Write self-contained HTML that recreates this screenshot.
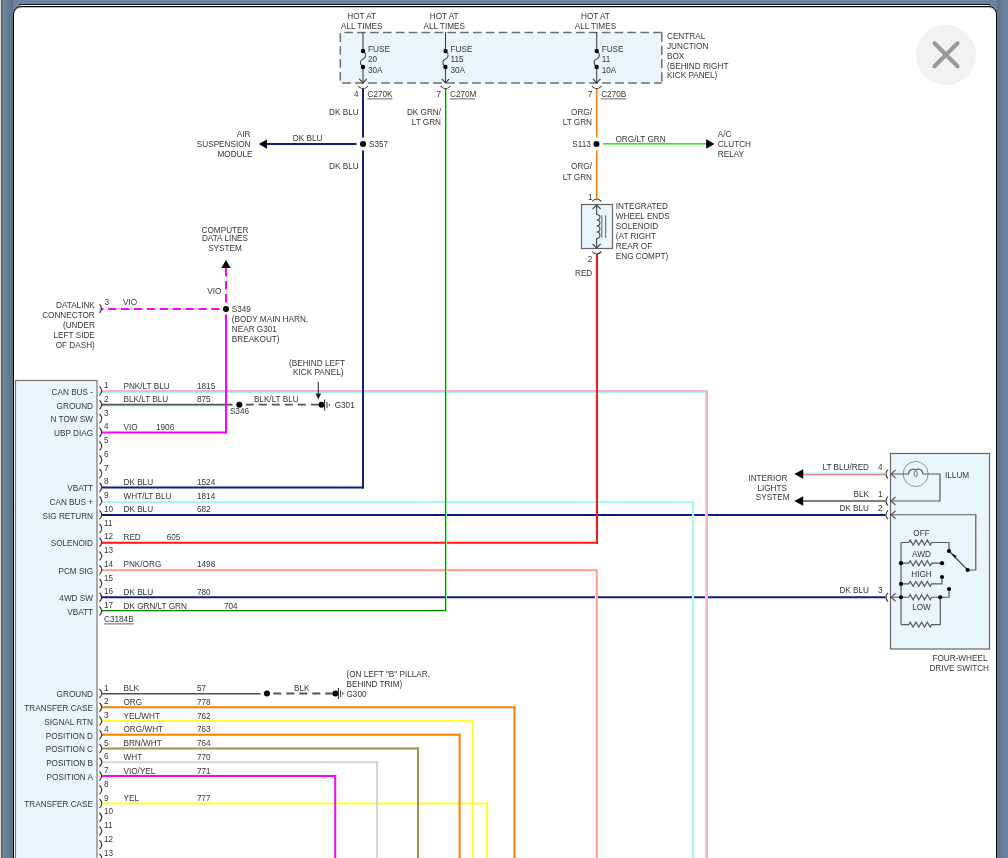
<!DOCTYPE html>
<html><head><meta charset="utf-8"><style>
html,body{margin:0;padding:0;width:1008px;height:858px;overflow:hidden;background:#fff}
#bg{position:absolute;left:0;top:0;width:1008px;height:858px;background:#6a85a2}
#lg{position:absolute;left:3px;top:0;width:10px;height:858px;background:linear-gradient(to right,#6d87a3,#5e7189)}
#rg{position:absolute;left:997px;top:0;width:10px;height:858px;background:linear-gradient(to right,#5e7189,#6d87a3)}
#c0{position:absolute;left:0;top:0;width:1px;height:858px;background:#dedede}
#c1{position:absolute;left:1px;top:0;width:2px;height:858px;background:linear-gradient(to right,#5a5a5a,#767676)}
#c7{position:absolute;left:1007px;top:0;width:1px;height:858px;background:#7a7a7a}
#topl{position:absolute;left:19px;top:4px;width:971px;height:1px;background:#10161c}
#topw{position:absolute;left:20px;top:5px;width:969px;height:1px;background:#fff}
#panel{position:absolute;left:13px;top:6px;width:982px;height:900px;background:#fff;border:1px solid #000;border-radius:8px;box-shadow:inset 0 1px 0 #bbb}
svg{position:absolute;left:0;top:0;-webkit-font-smoothing:antialiased;will-change:transform}
text{font-family:"Liberation Sans",sans-serif;font-size:8.2px}
</style></head><body>
<div id="bg"></div><div id="lg"></div><div id="rg"></div><div id="c0"></div><div id="c1"></div><div id="c7"></div>
<div id="topl"></div><div id="topw"></div>
<div id="panel"></div>
<svg width="1008" height="858" viewBox="0 0 1008 858">
<circle cx="946" cy="55" r="30" fill="#f2f2f2"/>
<path d="M934.5,43.3 L957.5,66.3 M957.5,43.3 L934.5,66.3" stroke="#999" stroke-width="4.2" stroke-linecap="round"/>
<line x1="364.0" y1="487.5" x2="101.5" y2="487.5" stroke="#0d1f80" stroke-width="2"/>
<line x1="356.5" y1="144" x2="266" y2="144" stroke="#0d1f80" stroke-width="2"/>
<line x1="447.0" y1="611.5" x2="101.5" y2="611.5" stroke="#90f890" stroke-width="1"/>
<line x1="446.0" y1="610.5" x2="101.5" y2="610.5" stroke="#008a00" stroke-width="1"/>
<line x1="603" y1="143.5" x2="706.5" y2="143.5" stroke="#ff8000" stroke-width="1.1"/>
<line x1="603" y1="144.5" x2="706.5" y2="144.5" stroke="#80f880" stroke-width="1"/>
<line x1="598.0" y1="542.75" x2="101.5" y2="542.75" stroke="#ff1414" stroke-width="2"/>
<line x1="227.0" y1="432.5" x2="101.5" y2="432.5" stroke="#ff00ff" stroke-width="2"/>
<line x1="101.5" y1="392.5" x2="706.0" y2="392.5" stroke="#a4f4f4" stroke-width="1"/>
<line x1="101.5" y1="391" x2="708.0" y2="391" stroke="#ffb0c8" stroke-width="2"/>
<line x1="101.5" y1="405.9" x2="232.5" y2="405.9" stroke="#a4f4f4" stroke-width="1"/>
<line x1="101.5" y1="404.6" x2="232.5" y2="404.6" stroke="#555" stroke-width="1.6"/>
<line x1="101.5" y1="501.5" x2="694.1" y2="501.5" stroke="#e4dede" stroke-width="1.2"/>
<line x1="101.5" y1="502.5" x2="693.05" y2="502.5" stroke="#a4f4f4" stroke-width="1.1"/>
<line x1="101.5" y1="515" x2="885.5" y2="515" stroke="#0d1f80" stroke-width="2"/>
<line x1="101.5" y1="571.5" x2="596.0" y2="571.5" stroke="#ffeedd" stroke-width="1"/>
<line x1="101.5" y1="569.5" x2="598.05" y2="569.5" stroke="#ffa8c4" stroke-width="1.1"/>
<line x1="101.5" y1="570.5" x2="597.05" y2="570.5" stroke="#ffa088" stroke-width="1.1"/>
<line x1="101.5" y1="597.25" x2="885.5" y2="597.25" stroke="#0d1f80" stroke-width="2"/>
<line x1="101.5" y1="693.7" x2="260.5" y2="693.7" stroke="#505050" stroke-width="1.6"/>
<line x1="101.5" y1="707.25" x2="515.4" y2="707.25" stroke="#ff8000" stroke-width="2"/>
<line x1="101.5" y1="721.0" x2="474.0" y2="721.0" stroke="#ffff30" stroke-width="2"/>
<line x1="101.5" y1="734.75" x2="460.6" y2="734.75" stroke="#ff8000" stroke-width="2"/>
<line x1="101.5" y1="748.5" x2="419.0" y2="748.5" stroke="#a89050" stroke-width="2"/>
<line x1="101.5" y1="762.25" x2="378.0" y2="762.25" stroke="#d4d4d4" stroke-width="2"/>
<line x1="101.5" y1="776.0" x2="336.2" y2="776.0" stroke="#ff00ff" stroke-width="2"/>
<line x1="101.5" y1="803.5" x2="488.0" y2="803.5" stroke="#ffff30" stroke-width="2"/>
<line x1="363" y1="89" x2="363" y2="137.5" stroke="#0d1f80" stroke-width="2"/>
<line x1="363" y1="150.5" x2="363" y2="488.5" stroke="#0d1f80" stroke-width="2"/>
<line x1="446.5" y1="88.5" x2="446.5" y2="612.0" stroke="#90f890" stroke-width="1"/>
<line x1="445.5" y1="88.5" x2="445.5" y2="611.0" stroke="#008a00" stroke-width="1"/>
<line x1="597.5" y1="88.5" x2="597.5" y2="137.5" stroke="#80f880" stroke-width="1"/>
<line x1="597.5" y1="150.5" x2="597.5" y2="199" stroke="#80f880" stroke-width="1"/>
<line x1="596.5" y1="88.5" x2="596.5" y2="137.5" stroke="#ff8000" stroke-width="1.1"/>
<line x1="596.5" y1="150.5" x2="596.5" y2="199" stroke="#ff8000" stroke-width="1.1"/>
<line x1="597" y1="254" x2="597" y2="543.75" stroke="#ff1414" stroke-width="2"/>
<line x1="226" y1="314.6" x2="226" y2="433.5" stroke="#ff00ff" stroke-width="2"/>
<line x1="705.5" y1="392.0" x2="705.5" y2="870" stroke="#a4f4f4" stroke-width="1"/>
<line x1="707" y1="390.0" x2="707" y2="870" stroke="#ffb0c8" stroke-width="2"/>
<line x1="693.5" y1="500.9" x2="693.5" y2="870" stroke="#e4dede" stroke-width="1.2"/>
<line x1="692.5" y1="501.95" x2="692.5" y2="870" stroke="#a4f4f4" stroke-width="1.1"/>
<line x1="595.5" y1="571.0" x2="595.5" y2="870" stroke="#ffeedd" stroke-width="1"/>
<line x1="597.5" y1="568.95" x2="597.5" y2="870" stroke="#ffa8c4" stroke-width="1.1"/>
<line x1="596.5" y1="569.95" x2="596.5" y2="870" stroke="#ffa088" stroke-width="1.1"/>
<line x1="514.4" y1="706.25" x2="514.4" y2="870" stroke="#ff8000" stroke-width="2"/>
<line x1="473" y1="720.0" x2="473" y2="870" stroke="#ffff30" stroke-width="2"/>
<line x1="459.6" y1="733.75" x2="459.6" y2="870" stroke="#ff8000" stroke-width="2"/>
<line x1="418" y1="747.5" x2="418" y2="870" stroke="#a89050" stroke-width="2"/>
<line x1="377" y1="761.25" x2="377" y2="870" stroke="#d4d4d4" stroke-width="2"/>
<line x1="335.2" y1="775.0" x2="335.2" y2="870" stroke="#ff00ff" stroke-width="2"/>
<line x1="487" y1="802.5" x2="487" y2="870" stroke="#ffff30" stroke-width="2"/>
<rect x="340.3" y="32.6" width="321.5" height="50.4" fill="#e9f6fe"/>
<line x1="661.8" y1="32.6" x2="340.3" y2="32.6" stroke="#6e6e6e" stroke-width="1.5" stroke-dasharray="8.6 4.27"/>
<line x1="661.8" y1="32.6" x2="661.8" y2="83" stroke="#6e6e6e" stroke-width="1.5" stroke-dasharray="9.2 4"/>
<line x1="342.1" y1="83" x2="661.8" y2="83" stroke="#6e6e6e" stroke-width="1.5" stroke-dasharray="8.8 4.2"/>
<line x1="340.3" y1="33.3" x2="340.3" y2="83" stroke="#6e6e6e" stroke-width="1.5" stroke-dasharray="8.6 4.3"/>
<text x="361.7" y="19" text-anchor="middle" fill="#363636">HOT AT</text>
<text x="361.7" y="29" text-anchor="middle" fill="#363636">ALL TIMES</text>
<path d="M363,32 L363,51 C367,54 366,58 363,59 C360,60 359,64 363,67 L363,83" stroke="#444" stroke-width="1.1" fill="none"/>
<path d="M359.3,78.8 L363,83 L366.7,78.8" stroke="#333" stroke-width="1.1" fill="none"/>
<circle cx="363" cy="51" r="2.2" fill="#000"/>
<circle cx="363" cy="67" r="2.2" fill="#000"/>
<text x="368" y="52" fill="#363636">FUSE</text>
<text x="368" y="62.3" fill="#363636">20</text>
<text x="368" y="72.7" fill="#363636">30A</text>
<path d="M358,86 Q363,91.5 368,86" stroke="#333" stroke-width="1.1" fill="none"/>
<text x="358.5" y="96.5" text-anchor="end" fill="#363636">4</text>
<text x="367.5" y="96.5" fill="#363636">C270K</text>
<line x1="367.5" y1="98.9" x2="392.5" y2="98.9" stroke="#666" stroke-width="1"/>
<text x="444.2" y="19" text-anchor="middle" fill="#363636">HOT AT</text>
<text x="444.2" y="29" text-anchor="middle" fill="#363636">ALL TIMES</text>
<path d="M445.5,32 L445.5,51 C449.5,54 448.5,58 445.5,59 C442.5,60 441.5,64 445.5,67 L445.5,83" stroke="#444" stroke-width="1.1" fill="none"/>
<path d="M441.8,78.8 L445.5,83 L449.2,78.8" stroke="#333" stroke-width="1.1" fill="none"/>
<circle cx="445.5" cy="51" r="2.2" fill="#000"/>
<circle cx="445.5" cy="67" r="2.2" fill="#000"/>
<text x="450.5" y="52" fill="#363636">FUSE</text>
<text x="450.5" y="62.3" fill="#363636">115</text>
<text x="450.5" y="72.7" fill="#363636">30A</text>
<path d="M440.5,86 Q445.5,91.5 450.5,86" stroke="#333" stroke-width="1.1" fill="none"/>
<text x="441.0" y="96.5" text-anchor="end" fill="#363636">7</text>
<text x="450.0" y="96.5" fill="#363636">C270M</text>
<line x1="450.0" y1="98.9" x2="475.0" y2="98.9" stroke="#666" stroke-width="1"/>
<text x="595.4000000000001" y="19" text-anchor="middle" fill="#363636">HOT AT</text>
<text x="595.4000000000001" y="29" text-anchor="middle" fill="#363636">ALL TIMES</text>
<path d="M596.7,32 L596.7,51 C600.7,54 599.7,58 596.7,59 C593.7,60 592.7,64 596.7,67 L596.7,83" stroke="#444" stroke-width="1.1" fill="none"/>
<path d="M593.0,78.8 L596.7,83 L600.4000000000001,78.8" stroke="#333" stroke-width="1.1" fill="none"/>
<circle cx="596.7" cy="51" r="2.2" fill="#000"/>
<circle cx="596.7" cy="67" r="2.2" fill="#000"/>
<text x="601.7" y="52" fill="#363636">FUSE</text>
<text x="601.7" y="62.3" fill="#363636">11</text>
<text x="601.7" y="72.7" fill="#363636">10A</text>
<path d="M591.7,86 Q596.7,91.5 601.7,86" stroke="#333" stroke-width="1.1" fill="none"/>
<text x="592.2" y="96.5" text-anchor="end" fill="#363636">7</text>
<text x="601.2" y="96.5" fill="#363636">C270B</text>
<line x1="601.2" y1="98.9" x2="626.2" y2="98.9" stroke="#666" stroke-width="1"/>
<text x="667" y="38.7" fill="#363636">CENTRAL</text>
<text x="667" y="48.6" fill="#363636">JUNCTION</text>
<text x="667" y="58.6" fill="#363636">BOX</text>
<text x="667" y="68.5" fill="#363636">(BEHIND RIGHT</text>
<text x="667" y="78.4" fill="#363636">KICK PANEL)</text>
<circle cx="363" cy="144" r="3" fill="#000"/>
<text x="358.7" y="115" text-anchor="end" fill="#363636">DK BLU</text>
<text x="358.7" y="169.4" text-anchor="end" fill="#363636">DK BLU</text>
<text x="369" y="147" fill="#363636">S357</text>
<path d="M258.8,144.1 L267,139.4 L267,148.8 Z" fill="#000"/>
<text x="292.8" y="140.7" fill="#363636">DK BLU</text>
<text x="250.5" y="136.7" text-anchor="end" fill="#363636">AIR</text>
<text x="250.5" y="146.6" text-anchor="end" fill="#363636">SUSPENSION</text>
<text x="252.5" y="156.5" text-anchor="end" fill="#363636">MODULE</text>
<text x="441" y="114.6" text-anchor="end" fill="#363636">DK GRN/</text>
<text x="441" y="124.7" text-anchor="end" fill="#363636">LT GRN</text>
<circle cx="596.5" cy="144" r="3" fill="#000"/>
<text x="592" y="114.7" text-anchor="end" fill="#363636">ORG/</text>
<text x="592" y="124.6" text-anchor="end" fill="#363636">LT GRN</text>
<text x="590.8" y="146.5" text-anchor="end" fill="#363636">S113</text>
<text x="592" y="169.4" text-anchor="end" fill="#363636">ORG/</text>
<text x="592" y="179.7" text-anchor="end" fill="#363636">LT GRN</text>
<path d="M714.5,144 L706.2,139.3 L706.2,148.7 Z" fill="#000"/>
<text x="615.5" y="141.7" fill="#363636">ORG/LT GRN</text>
<text x="717.8" y="136.7" fill="#363636">A/C</text>
<text x="717.8" y="147" fill="#363636">CLUTCH</text>
<text x="717.8" y="156.5" fill="#363636">RELAY</text>
<rect x="581.5" y="204.5" width="31" height="44" fill="#e9f6fe" stroke="#666" stroke-width="1.2"/>
<path d="M592,201.5 Q596.6,196.5 601.5,201.5" stroke="#333" stroke-width="1.1" fill="none"/>
<path d="M592,251.5 Q596.6,256.5 601.5,251.5" stroke="#333" stroke-width="1.1" fill="none"/>
<text x="592.5" y="199.5" text-anchor="end" fill="#363636">1</text>
<path d="M596.6,205 L596.6,214.5 C601,214.5 601,220 596.6,220 C601,220 601,226 596.6,226 C601,226 601,232 596.6,232 C601,232 601,238.5 596.6,238.5 L596.6,248" stroke="#444" stroke-width="1.1" fill="none"/>
<path d="M592.6,209 L596.6,205 L600.6,209" stroke="#444" stroke-width="1.1" fill="none"/>
<path d="M592.6,244 L596.6,248 L600.6,244" stroke="#444" stroke-width="1.1" fill="none"/>
<line x1="601.8" y1="215.3" x2="601.8" y2="237.7" stroke="#777" stroke-width="1.2"/>
<line x1="605.6" y1="215.3" x2="605.6" y2="237.7" stroke="#777" stroke-width="1.2"/>
<text x="615.8" y="208.8" fill="#363636">INTEGRATED</text>
<text x="615.8" y="218.8" fill="#363636">WHEEL ENDS</text>
<text x="615.8" y="228.6" fill="#363636">SOLENOID</text>
<text x="615.8" y="238.6" fill="#363636">(AT RIGHT</text>
<text x="615.8" y="248.6" fill="#363636">REAR OF</text>
<text x="615.8" y="258.5" fill="#363636">ENG COMPT)</text>
<text x="592.3" y="262.3" text-anchor="end" fill="#363636">2</text>
<text x="592.3" y="276" text-anchor="end" fill="#363636">RED</text>
<path d="M226,260 L230.7,268 L221.3,268 Z" fill="#000"/>
<line x1="226" y1="268" x2="226" y2="302.6" stroke="#ff00ff" stroke-width="2" stroke-dasharray="8.5 4.5"/>
<circle cx="226" cy="309" r="3" fill="#000"/>
<line x1="219.6" y1="309" x2="102" y2="309" stroke="#ff00ff" stroke-width="2" stroke-dasharray="8.3 4.6"/>
<text x="225" y="232.5" text-anchor="middle" fill="#363636">COMPUTER</text>
<text x="225" y="241" text-anchor="middle" fill="#363636">DATA LINES</text>
<text x="225" y="250.7" text-anchor="middle" fill="#363636">SYSTEM</text>
<text x="221.4" y="293.8" text-anchor="end" fill="#363636">VIO</text>
<text x="123" y="305.4" fill="#363636">VIO</text>
<text x="104.4" y="304.8" fill="#363636">3</text>
<path d="M99.5,304 Q103.5,308.5 99.5,313" stroke="#333" stroke-width="1.1" fill="none"/>
<text x="94.8" y="307.8" text-anchor="end" fill="#363636">DATALINK</text>
<text x="94.8" y="317.6" text-anchor="end" fill="#363636">CONNECTOR</text>
<text x="94.8" y="327.7" text-anchor="end" fill="#363636">(UNDER</text>
<text x="94.8" y="337.6" text-anchor="end" fill="#363636">LEFT SIDE</text>
<text x="94.8" y="347.6" text-anchor="end" fill="#363636">OF DASH)</text>
<text x="231.8" y="311.8" fill="#363636">S349</text>
<text x="231.8" y="321.9" fill="#363636">(BODY MAIN HARN,</text>
<text x="231.8" y="331.8" fill="#363636">NEAR G301</text>
<text x="231.8" y="341.8" fill="#363636">BREAKOUT)</text>
<rect x="15.5" y="380.5" width="81.5" height="500" fill="#e9f6fe" stroke="#777" stroke-width="1.2"/>
<path d="M99.5,386.5 Q104,391.0 99.5,395.5" stroke="#333" stroke-width="1.1" fill="none"/>
<text x="104" y="388.0" fill="#363636">1</text>
<path d="M99.5,400.25 Q104,404.75 99.5,409.25" stroke="#333" stroke-width="1.1" fill="none"/>
<text x="104" y="401.75" fill="#363636">2</text>
<path d="M99.5,414.0 Q104,418.5 99.5,423.0" stroke="#333" stroke-width="1.1" fill="none"/>
<text x="104" y="415.5" fill="#363636">3</text>
<path d="M99.5,427.75 Q104,432.25 99.5,436.75" stroke="#333" stroke-width="1.1" fill="none"/>
<text x="104" y="429.25" fill="#363636">4</text>
<path d="M99.5,441.5 Q104,446.0 99.5,450.5" stroke="#333" stroke-width="1.1" fill="none"/>
<text x="104" y="443.0" fill="#363636">5</text>
<path d="M99.5,455.25 Q104,459.75 99.5,464.25" stroke="#333" stroke-width="1.1" fill="none"/>
<text x="104" y="456.75" fill="#363636">6</text>
<path d="M99.5,469.0 Q104,473.5 99.5,478.0" stroke="#333" stroke-width="1.1" fill="none"/>
<text x="104" y="470.5" fill="#363636">7</text>
<path d="M99.5,482.75 Q104,487.25 99.5,491.75" stroke="#333" stroke-width="1.1" fill="none"/>
<text x="104" y="484.25" fill="#363636">8</text>
<path d="M99.5,496.5 Q104,501.0 99.5,505.5" stroke="#333" stroke-width="1.1" fill="none"/>
<text x="104" y="498.0" fill="#363636">9</text>
<path d="M99.5,510.25 Q104,514.75 99.5,519.25" stroke="#333" stroke-width="1.1" fill="none"/>
<text x="104" y="511.75" fill="#363636">10</text>
<path d="M99.5,524.0 Q104,528.5 99.5,533.0" stroke="#333" stroke-width="1.1" fill="none"/>
<text x="104" y="525.5" fill="#363636">11</text>
<path d="M99.5,537.75 Q104,542.25 99.5,546.75" stroke="#333" stroke-width="1.1" fill="none"/>
<text x="104" y="539.25" fill="#363636">12</text>
<path d="M99.5,551.5 Q104,556.0 99.5,560.5" stroke="#333" stroke-width="1.1" fill="none"/>
<text x="104" y="553.0" fill="#363636">13</text>
<path d="M99.5,565.25 Q104,569.75 99.5,574.25" stroke="#333" stroke-width="1.1" fill="none"/>
<text x="104" y="566.75" fill="#363636">14</text>
<path d="M99.5,579.0 Q104,583.5 99.5,588.0" stroke="#333" stroke-width="1.1" fill="none"/>
<text x="104" y="580.5" fill="#363636">15</text>
<path d="M99.5,592.75 Q104,597.25 99.5,601.75" stroke="#333" stroke-width="1.1" fill="none"/>
<text x="104" y="594.25" fill="#363636">16</text>
<path d="M99.5,606.5 Q104,611.0 99.5,615.5" stroke="#333" stroke-width="1.1" fill="none"/>
<text x="104" y="608.0" fill="#363636">17</text>
<path d="M99.5,689.0 Q104,693.5 99.5,698.0" stroke="#333" stroke-width="1.1" fill="none"/>
<text x="104" y="690.5" fill="#363636">1</text>
<path d="M99.5,702.75 Q104,707.25 99.5,711.75" stroke="#333" stroke-width="1.1" fill="none"/>
<text x="104" y="704.25" fill="#363636">2</text>
<path d="M99.5,716.5 Q104,721.0 99.5,725.5" stroke="#333" stroke-width="1.1" fill="none"/>
<text x="104" y="718.0" fill="#363636">3</text>
<path d="M99.5,730.25 Q104,734.75 99.5,739.25" stroke="#333" stroke-width="1.1" fill="none"/>
<text x="104" y="731.75" fill="#363636">4</text>
<path d="M99.5,744.0 Q104,748.5 99.5,753.0" stroke="#333" stroke-width="1.1" fill="none"/>
<text x="104" y="745.5" fill="#363636">5</text>
<path d="M99.5,757.75 Q104,762.25 99.5,766.75" stroke="#333" stroke-width="1.1" fill="none"/>
<text x="104" y="759.25" fill="#363636">6</text>
<path d="M99.5,771.5 Q104,776.0 99.5,780.5" stroke="#333" stroke-width="1.1" fill="none"/>
<text x="104" y="773.0" fill="#363636">7</text>
<path d="M99.5,785.25 Q104,789.75 99.5,794.25" stroke="#333" stroke-width="1.1" fill="none"/>
<text x="104" y="786.75" fill="#363636">8</text>
<path d="M99.5,799.0 Q104,803.5 99.5,808.0" stroke="#333" stroke-width="1.1" fill="none"/>
<text x="104" y="800.5" fill="#363636">9</text>
<path d="M99.5,812.75 Q104,817.25 99.5,821.75" stroke="#333" stroke-width="1.1" fill="none"/>
<text x="104" y="814.25" fill="#363636">10</text>
<path d="M99.5,826.5 Q104,831.0 99.5,835.5" stroke="#333" stroke-width="1.1" fill="none"/>
<text x="104" y="828.0" fill="#363636">11</text>
<path d="M99.5,840.25 Q104,844.75 99.5,849.25" stroke="#333" stroke-width="1.1" fill="none"/>
<text x="104" y="841.75" fill="#363636">12</text>
<path d="M99.5,854.0 Q104,858.5 99.5,863.0" stroke="#333" stroke-width="1.1" fill="none"/>
<text x="104" y="855.5" fill="#363636">13</text>
<text x="93" y="394.75" text-anchor="end" fill="#363636">CAN BUS -</text>
<text x="93" y="408.5" text-anchor="end" fill="#363636">GROUND</text>
<text x="93" y="422.25" text-anchor="end" fill="#363636">N TOW SW</text>
<text x="93" y="436.0" text-anchor="end" fill="#363636">UBP DIAG</text>
<text x="93" y="491.0" text-anchor="end" fill="#363636">VBATT</text>
<text x="93" y="504.75" text-anchor="end" fill="#363636">CAN BUS +</text>
<text x="93" y="518.5" text-anchor="end" fill="#363636">SIG RETURN</text>
<text x="93" y="546.0" text-anchor="end" fill="#363636">SOLENOID</text>
<text x="93" y="573.5" text-anchor="end" fill="#363636">PCM SIG</text>
<text x="93" y="601.0" text-anchor="end" fill="#363636">4WD SW</text>
<text x="93" y="614.75" text-anchor="end" fill="#363636">VBATT</text>
<text x="93" y="697.25" text-anchor="end" fill="#363636">GROUND</text>
<text x="93" y="711.0" text-anchor="end" fill="#363636">TRANSFER CASE</text>
<text x="93" y="724.75" text-anchor="end" fill="#363636">SIGNAL RTN</text>
<text x="93" y="738.5" text-anchor="end" fill="#363636">POSITION D</text>
<text x="93" y="752.25" text-anchor="end" fill="#363636">POSITION C</text>
<text x="93" y="766.0" text-anchor="end" fill="#363636">POSITION B</text>
<text x="93" y="779.75" text-anchor="end" fill="#363636">POSITION A</text>
<text x="93" y="807.25" text-anchor="end" fill="#363636">TRANSFER CASE</text>
<text x="104" y="621.7" fill="#363636">C3184B</text>
<line x1="104" y1="623.9" x2="133.5" y2="623.9" stroke="#666" stroke-width="1"/>
<text x="123.5" y="388.5" fill="#363636">PNK/LT BLU</text>
<text x="197" y="388.5" fill="#363636">1815</text>
<text x="123.5" y="402.25" fill="#363636">BLK/LT BLU</text>
<text x="197" y="402.25" fill="#363636">875</text>
<circle cx="239.3" cy="404.7" r="3" fill="#000"/>
<line x1="245.8" y1="404.7" x2="318.5" y2="404.7" stroke="#555" stroke-width="1.8" stroke-dasharray="8 5"/>
<circle cx="321.5" cy="404.7" r="3" fill="#000"/>
<line x1="324.6" y1="399.4" x2="324.6" y2="410.6" stroke="#333" stroke-width="1.1"/>
<line x1="327" y1="402" x2="327" y2="408" stroke="#444" stroke-width="1.1"/>
<line x1="329.3" y1="403.8" x2="329.3" y2="406" stroke="#444" stroke-width="1.1"/>
<text x="334.7" y="407.8" fill="#363636">G301</text>
<text x="229.9" y="414" fill="#363636">S346</text>
<text x="253.9" y="401.5" fill="#363636">BLK/LT BLU</text>
<line x1="318.3" y1="382" x2="318.3" y2="398" stroke="#222" stroke-width="1"/>
<path d="M318.3,399.5 L315.5,393.5 L321.1,393.5 Z" fill="#222"/>
<text x="317" y="366" text-anchor="middle" fill="#363636">(BEHIND LEFT</text>
<text x="318.3" y="374.7" text-anchor="middle" fill="#363636">KICK PANEL)</text>
<text x="123.5" y="429.75" fill="#363636">VIO</text>
<text x="156" y="429.75" fill="#363636">1906</text>
<text x="123.5" y="484.75" fill="#363636">DK BLU</text>
<text x="197" y="484.75" fill="#363636">1524</text>
<text x="123.5" y="498.5" fill="#363636">WHT/LT BLU</text>
<text x="197" y="498.5" fill="#363636">1814</text>
<text x="123.5" y="512.25" fill="#363636">DK BLU</text>
<text x="197" y="512.25" fill="#363636">682</text>
<text x="123.5" y="539.75" fill="#363636">RED</text>
<text x="166.7" y="539.75" fill="#363636">605</text>
<text x="123.5" y="567.25" fill="#363636">PNK/ORG</text>
<text x="197" y="567.25" fill="#363636">1498</text>
<text x="123.5" y="594.75" fill="#363636">DK BLU</text>
<text x="197" y="594.75" fill="#363636">780</text>
<text x="123.5" y="608.5" fill="#363636">DK GRN/LT GRN</text>
<text x="224" y="608.5" fill="#363636">704</text>
<circle cx="267" cy="693.5" r="3" fill="#000"/>
<line x1="273.3" y1="693.5" x2="332.5" y2="693.5" stroke="#555" stroke-width="1.8" stroke-dasharray="8 5"/>
<circle cx="335.4" cy="693.5" r="3" fill="#000"/>
<line x1="338.4" y1="688" x2="338.4" y2="699" stroke="#333" stroke-width="1.1"/>
<line x1="340.6" y1="690.5" x2="340.6" y2="697" stroke="#444" stroke-width="1.1"/>
<line x1="342.8" y1="692.3" x2="342.8" y2="694.7" stroke="#444" stroke-width="1.1"/>
<text x="301.7" y="691.2" text-anchor="middle" fill="#363636">BLK</text>
<text x="346.5" y="677" fill="#363636">(ON LEFT &quot;B&quot; PILLAR,</text>
<text x="346.5" y="686.8" fill="#363636">BEHIND TRIM)</text>
<text x="346.5" y="696.6" fill="#363636">G300</text>
<text x="123.5" y="691.0" fill="#363636">BLK</text>
<text x="197" y="691.0" fill="#363636">57</text>
<text x="123.5" y="704.75" fill="#363636">ORG</text>
<text x="197" y="704.75" fill="#363636">778</text>
<text x="123.5" y="718.5" fill="#363636">YEL/WHT</text>
<text x="197" y="718.5" fill="#363636">762</text>
<text x="123.5" y="732.25" fill="#363636">ORG/WHT</text>
<text x="197" y="732.25" fill="#363636">763</text>
<text x="123.5" y="746.0" fill="#363636">BRN/WHT</text>
<text x="197" y="746.0" fill="#363636">764</text>
<text x="123.5" y="759.75" fill="#363636">WHT</text>
<text x="197" y="759.75" fill="#363636">770</text>
<text x="123.5" y="773.5" fill="#363636">VIO/YEL</text>
<text x="197" y="773.5" fill="#363636">771</text>
<text x="123.5" y="801.0" fill="#363636">YEL</text>
<text x="197" y="801.0" fill="#363636">777</text>
<rect x="890.5" y="453.5" width="99" height="195.5" fill="#e9f6fe" stroke="#666" stroke-width="1.2"/>
<path d="M888,469.5 Q884,474 888,478.5" stroke="#333" stroke-width="1.1" fill="none"/>
<path d="M895.5,470 L891,474 L895.5,478" stroke="#555" stroke-width="1.1" fill="none"/>
<path d="M888,496.5 Q884,501 888,505.5" stroke="#333" stroke-width="1.1" fill="none"/>
<path d="M895.5,497 L891,501 L895.5,505" stroke="#555" stroke-width="1.1" fill="none"/>
<path d="M888,510.25 Q884,514.75 888,519.25" stroke="#333" stroke-width="1.1" fill="none"/>
<path d="M895.5,510.75 L891,514.75 L895.5,518.75" stroke="#555" stroke-width="1.1" fill="none"/>
<path d="M888,592.75 Q884,597.25 888,601.75" stroke="#333" stroke-width="1.1" fill="none"/>
<path d="M895.5,593.25 L891,597.25 L895.5,601.25" stroke="#555" stroke-width="1.1" fill="none"/>
<line x1="803" y1="473.25" x2="885.5" y2="473.25" stroke="#a4f4f4" stroke-width="1.5"/>
<line x1="803" y1="474.75" x2="885.5" y2="474.75" stroke="#e06060" stroke-width="1"/>
<path d="M794.3,474 L803.2,469.3 L803.2,478.7 Z" fill="#000"/>
<text x="869" y="469.5" text-anchor="end" fill="#363636">LT BLU/RED</text>
<text x="878" y="469.5" fill="#363636">4</text>
<line x1="803" y1="501" x2="885.5" y2="501" stroke="#555" stroke-width="1.7"/>
<path d="M794.3,501 L803.2,496.3 L803.2,505.7 Z" fill="#000"/>
<text x="869" y="497.3" text-anchor="end" fill="#363636">BLK</text>
<text x="878" y="497.3" fill="#363636">1</text>
<text x="869" y="510.7" text-anchor="end" fill="#363636">DK BLU</text>
<text x="878" y="510.7" fill="#363636">2</text>
<text x="869" y="593.2" text-anchor="end" fill="#363636">DK BLU</text>
<text x="878" y="593.2" fill="#363636">3</text>
<text x="787.5" y="480.5" text-anchor="end" fill="#363636">INTERIOR</text>
<text x="787" y="490.6" text-anchor="end" fill="#363636">LIGHTS</text>
<text x="789.5" y="500.4" text-anchor="end" fill="#363636">SYSTEM</text>
<text x="987.5" y="661" text-anchor="end" fill="#363636">FOUR-WHEEL</text>
<text x="989" y="670.6" text-anchor="end" fill="#363636">DRIVE SWITCH</text>
<circle cx="915.7" cy="474" r="12.5" fill="none" stroke="#888" stroke-width="0.9"/>
<path d="M891,474 L908.5,474 C909,469 913,468.5 915.7,470 C918.5,468.5 922.5,469 923,474 L940,474 L940,501 L891,501" stroke="#5a5a5a" stroke-width="1.2" fill="none"/>
<ellipse cx="915.7" cy="473.8" rx="1.6" ry="3" fill="none" stroke="#666" stroke-width="0.9"/>
<text x="945" y="478" fill="#363636">ILLUM</text>
<path d="M891,514.75 L975.8,514.75 L975.8,570 L967.7,570" stroke="#5a5a5a" stroke-width="1.2" fill="none"/>
<path d="M901,542.5 L901,624.6" stroke="#5a5a5a" stroke-width="1.2" fill="none"/>
<path d="M901,542.5 L908.8,542.5 L908.8,542.5L910.22,540.0L913.07,545.0L915.92,540.0L918.77,545.0L921.62,540.0L924.48,545.0L927.33,540.0L930.18,545.0L931.6,542.5 L949,542.5 L949,551" stroke="#5a5a5a" stroke-width="1.2" fill="none"/>
<path d="M901,563.2 L908.8,563.2 L908.8,563.2L910.22,560.7L913.07,565.7L915.92,560.7L918.77,565.7L921.62,560.7L924.48,565.7L927.33,560.7L930.18,565.7L931.6,563.2 L942,563.2" stroke="#5a5a5a" stroke-width="1.2" fill="none"/>
<path d="M901,583.9 L908.8,583.9 L908.8,583.9L910.22,581.4L913.07,586.4L915.92,581.4L918.77,586.4L921.62,581.4L924.48,586.4L927.33,581.4L930.18,586.4L931.6,583.9 L942,583.9 L942,577" stroke="#5a5a5a" stroke-width="1.2" fill="none"/>
<path d="M891,597.25 L908.8,597.25 L908.8,597.25L910.22,594.75L913.07,599.75L915.92,594.75L918.77,599.75L921.62,594.75L924.48,599.75L927.33,594.75L930.18,599.75L931.6,597.25 L949,597.25 L949,589" stroke="#5a5a5a" stroke-width="1.2" fill="none"/>
<path d="M901,624.6 L908.8,624.6 L908.8,624.6L910.22,622.1L913.07,627.1L915.92,622.1L918.77,627.1L921.62,622.1L924.48,627.1L927.33,622.1L930.18,627.1L931.6,624.6 L940.3,624.6 L940.3,597.25" stroke="#5a5a5a" stroke-width="1.2" fill="none"/>
<path d="M967.7,570 L949,551" stroke="#444" stroke-width="1.1" fill="none"/>
<path d="M951,553 L956.9,556 L954.6,558.3 Z" fill="#222"/>
<circle cx="949" cy="551" r="2.1" fill="#000"/>
<circle cx="942" cy="563.2" r="2.1" fill="#000"/>
<circle cx="942" cy="577" r="2.1" fill="#000"/>
<circle cx="949" cy="589" r="2.1" fill="#000"/>
<circle cx="901" cy="563.2" r="2.1" fill="#000"/>
<circle cx="901" cy="583.9" r="2.1" fill="#000"/>
<circle cx="901" cy="597.25" r="2.1" fill="#000"/>
<circle cx="940.3" cy="597.25" r="2.1" fill="#000"/>
<circle cx="967.7" cy="570" r="2.1" fill="#000"/>
<text x="921.5" y="535.8" text-anchor="middle" fill="#363636">OFF</text>
<text x="921.5" y="556.9" text-anchor="middle" fill="#363636">AWD</text>
<text x="921.5" y="577" text-anchor="middle" fill="#363636">HIGH</text>
<text x="921.5" y="609.5" text-anchor="middle" fill="#363636">LOW</text>
</svg>
</body></html>
